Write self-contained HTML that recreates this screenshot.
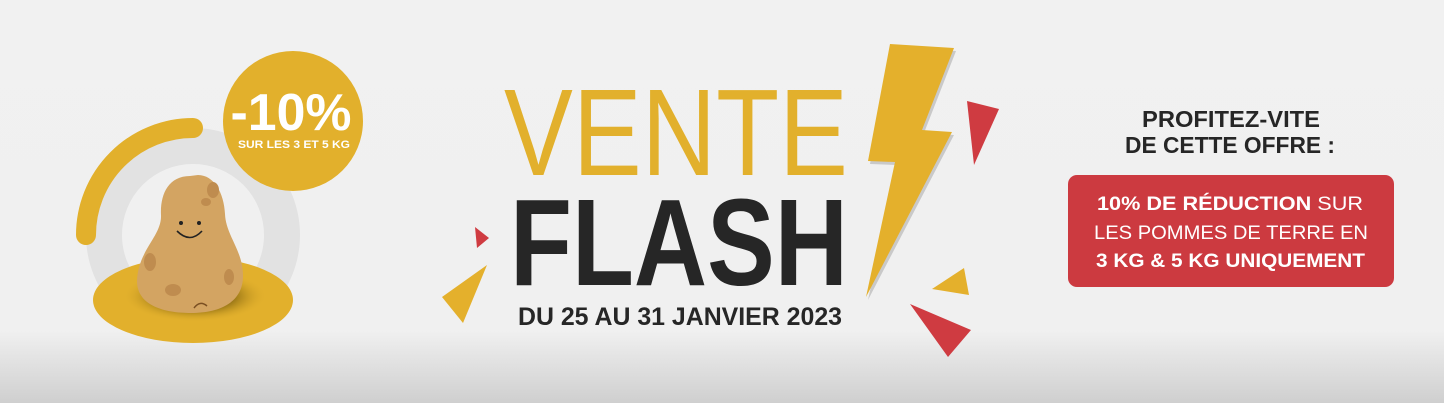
<!DOCTYPE html>
<html><head><meta charset="utf-8"><style>
html,body{margin:0;padding:0;width:1444px;height:403px;overflow:hidden;background:#f1f1f1}
svg{display:block}
text{font-family:"Liberation Sans",sans-serif}
</style></head><body>
<svg width="1444" height="403" viewBox="0 0 1444 403" xmlns="http://www.w3.org/2000/svg">
<defs>
<linearGradient id="bg" x1="0" y1="0" x2="0" y2="1">
<stop offset="0" stop-color="#f1f1f1"/><stop offset="0.82" stop-color="#f0f0f0"/><stop offset="1" stop-color="#cfcfcf"/>
</linearGradient>
<radialGradient id="sh" cx="0.5" cy="0.5" r="0.5">
<stop offset="0" stop-color="#5a4508"/><stop offset="0.55" stop-color="#8a6a12" stop-opacity="0.8"/><stop offset="1" stop-color="#e2b02c" stop-opacity="0"/>
</radialGradient>
</defs>
<rect width="1444" height="403" fill="url(#bg)"/>
<!-- left art -->
<circle cx="193" cy="235" r="89" fill="none" stroke="#e2e2e2" stroke-width="36"/>
<path d="M86,235 A107,107 0 0 1 193,128" fill="none" stroke="#e2b02c" stroke-width="20" stroke-linecap="round"/>
<ellipse cx="193" cy="300" rx="100" ry="43" fill="#e2b02c"/>
<ellipse cx="195" cy="296" rx="72" ry="26" fill="url(#sh)"/>
<path d="M190,176 C168,176 160,195 161,215 C162,236 138,250 137,281 C137,306 165,313 191,313 C222,313 243,301 243,276 C243,250 226,236 225,214 C224,193 214,175 198,175 Z" fill="#d3a462"/>
<ellipse cx="213" cy="190" rx="6" ry="8" fill="#bf8c4f"/>
<ellipse cx="150" cy="262" rx="6" ry="9" fill="#bf8c4f"/>
<ellipse cx="173" cy="290" rx="8" ry="6" fill="#bf8c4f"/>
<ellipse cx="229" cy="277" rx="5" ry="8" fill="#bf8c4f"/>
<ellipse cx="206" cy="202" rx="5" ry="4" fill="#bf8c4f"/>
<circle cx="181" cy="223" r="2" fill="#222"/><circle cx="199" cy="223" r="2" fill="#222"/>
<path d="M177,231 Q190,244 202,231" fill="none" stroke="#222" stroke-width="1.6"/>
<path d="M194,308 Q200,300 207,306" fill="none" stroke="#7a4f22" stroke-width="1.5"/>
<circle cx="293" cy="121" r="70" fill="#e2b02c"/>
<text x="291" y="130" text-anchor="middle" font-size="52" font-weight="bold" fill="#fff" textLength="121" lengthAdjust="spacingAndGlyphs">-10%</text>
<text x="294" y="148" text-anchor="middle" font-size="11" font-weight="bold" fill="#fff" textLength="112" lengthAdjust="spacingAndGlyphs">SUR LES 3 ET 5 KG</text>
<!-- center -->
<text x="504" y="175" font-size="123" fill="#e2b02c" textLength="344" lengthAdjust="spacingAndGlyphs">VENTE</text>
<text x="510" y="285" font-size="123" font-weight="bold" fill="#262626" textLength="338" lengthAdjust="spacingAndGlyphs">FLASH</text>
<text x="518" y="325" font-size="25" font-weight="bold" fill="#262626" textLength="324" lengthAdjust="spacingAndGlyphs">DU 25 AU 31 JANVIER 2023</text>
<g transform="translate(2,3)" fill="#c9c9c9">
<polygon points="890,44 954,48 922,130 952,132 866,297 895,162 868,161"/>
</g>
<polygon points="890,44 954,48 922,130 952,132 866,297 895,162 868,161" fill="#e4b02c"/>
<polygon points="967,101 999,109 974,165" fill="#cf3b41"/>
<polygon points="964,268 969,295 932,289" fill="#e4b02c"/>
<polygon points="910,304 971,330 948,357" fill="#cf3b41"/>
<polygon points="475,227 489,238 477,248" fill="#cf3b41"/>
<polygon points="442,297 487,265 463,323" fill="#e4b02c"/>
<!-- right -->
<text x="1231" y="127" text-anchor="middle" font-size="23" font-weight="bold" fill="#262626" textLength="178" lengthAdjust="spacingAndGlyphs">PROFITEZ-VITE</text>
<text x="1230" y="153" text-anchor="middle" font-size="23" font-weight="bold" fill="#262626" textLength="210" lengthAdjust="spacingAndGlyphs">DE CETTE OFFRE :</text>
<rect x="1068" y="175" width="326" height="112" rx="9" fill="#cc3a40"/>
<text x="1097" y="210" font-size="19.5" fill="#fff" textLength="266" lengthAdjust="spacingAndGlyphs"><tspan font-weight="bold">10% DE RÉDUCTION</tspan> SUR</text>
<text x="1094" y="239" font-size="19.5" fill="#fff" textLength="274" lengthAdjust="spacingAndGlyphs">LES POMMES DE TERRE EN</text>
<text x="1096" y="267" font-size="19.5" font-weight="bold" fill="#fff" textLength="269" lengthAdjust="spacingAndGlyphs">3 KG &amp; 5 KG UNIQUEMENT</text>
</svg>
</body></html>
